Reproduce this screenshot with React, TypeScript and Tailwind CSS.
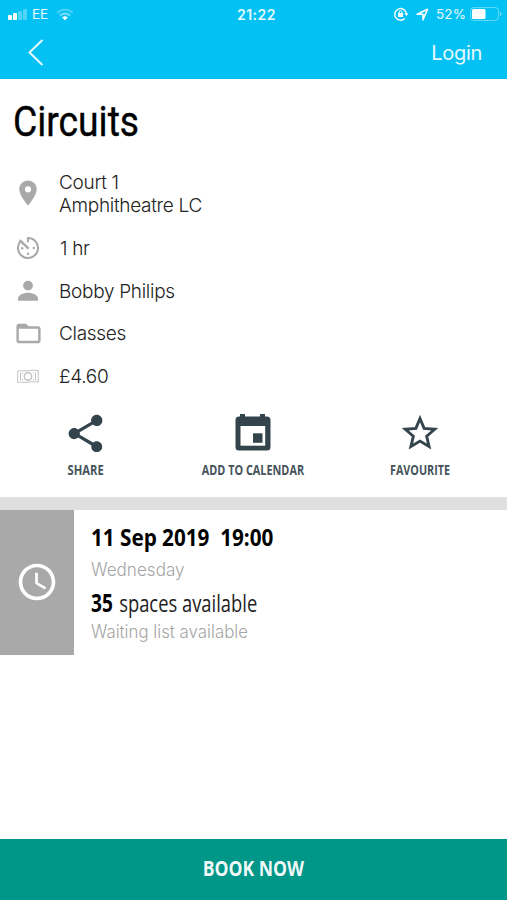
import type { ReactNode } from 'react';
import { MdPlace, MdFolderOpen, MdShare, MdAccessTime } from 'react-icons/md';

function StatusBar() {
  return (
    <div className="flex h-7 items-center px-[7px] font-['Inter',sans-serif] text-[13.5px] text-white/90">
      <div className="flex flex-1 items-center">
        <svg width="20" height="11" viewBox="0 0 20 11" fill="white" className="mt-px">
          <rect x="1" y="6" width="4" height="5" rx="1" />
          <rect x="6" y="4" width="4" height="7" rx="1" />
          <rect x="11" y="2" width="4" height="9" rx="1" opacity=".3" />
          <rect x="16" y="0" width="4" height="11" rx="1" opacity=".3" />
        </svg>
        <span className="ml-[5px]">EE</span>
        <svg width="18" height="13" viewBox="0 0 18 13" fill="none" stroke="white" strokeWidth="1.8" className="ml-[8px]">
          <path d="M1.2 4.8a11 11 0 0 1 15.6 0" opacity=".3" />
          <path d="M4 7.6a7 7 0 0 1 10 0" opacity=".45" />
          <path d="M9 12.3 6.2 9.5a4 4 0 0 1 5.6 0Z" fill="white" stroke="none" />
        </svg>
      </div>
      <div className="translate-x-[3px] text-[14px] font-semibold tracking-[0.5px]">21:22</div>
      <div className="flex flex-1 items-center justify-end">
        <svg width="15" height="14" viewBox="0 0 15 14" fill="none" stroke="white" strokeWidth="1.4">
          <path d="M10.7 11.5A5.8 5.8 0 1 1 12.4 7" />
          <path d="m10.3 6.4 2.2 2.5 2-2.7Z" fill="white" stroke="none" />
          <rect x="4.1" y="6.1" width="5" height="3.8" rx=".5" fill="white" stroke="none" />
          <path d="M5.2 6.5V5.1a1.4 1.4 0 0 1 2.8 0v1.4" strokeWidth="1" />
        </svg>
        <svg width="13" height="13" viewBox="0 0 13 13" fill="none" stroke="white" strokeWidth="1.6" strokeLinejoin="round" className="ml-[7px]">
          <path d="M1.2 6.2 11.5 1.3 7 11.8V6.2Z" />
        </svg>
        <span className="ml-[7px] tracking-[0.1px]">52%</span>
        <svg width="32" height="14" viewBox="0 0 32 14" className="ml-[4px] -mr-[2px]">
          <rect x=".6" y=".6" width="27.8" height="12.8" rx="3" fill="none" stroke="white" strokeOpacity=".4" />
          <rect x="2" y="2" width="13.5" height="10" rx="1.5" fill="white" />
          <path d="M30 5v4c1.2-.4 1.6-1.2 1.6-2S31.2 5.4 30 5Z" fill="white" opacity=".45" />
        </svg>
      </div>
    </div>
  );
}

function TimerIcon() {
  return (
    <svg width="24" height="24" viewBox="0 0 24 24" fill="none" stroke="currentColor" strokeWidth="2.1">
      <path d="M12 6.3V2a10 10 0 1 1-7.7 3.6" />
      <path d="M3.6 4.2 12.6 12.6" strokeWidth="2.5" />
      <g fill="currentColor" stroke="none">
        <circle cx="6.2" cy="12.3" r="1.2" />
        <circle cx="17.8" cy="12" r="1.2" />
        <circle cx="12" cy="17.8" r="1.2" />
      </g>
    </svg>
  );
}

function PersonIcon() {
  return (
    <svg width="22" height="22" viewBox="0 0 22 22" fill="currentColor">
      <circle cx="11" cy="5.6" r="4.9" />
      <path d="M1 20.8v-2.1c0-3.600 5-5.900 10-5.900s10 2.300 10 5.900v2.100Z" />
    </svg>
  );
}

function MoneyIcon() {
  return (
    <svg width="22" height="15" viewBox="0 0 22 15" fill="none" stroke="#c3c3c3" strokeWidth="1">
      <path d="M.7 2.2C4 .8 7 2.6 11 1.8s7-.6 10.300-.1v11.400c-3.300-.5-6.300-.5-10.300.1S4 12.600.7 13.700Z" />
      <circle cx="11" cy="7.5" r="3.7" strokeWidth="1.5" />
      <path d="M3.500 3.500v8M5.500 3.500v1.200M5.500 10.200v1.300M18.500 3.500v8M16.500 3.500v1.200M16.500 10.200v1.300" />
    </svg>
  );
}

function CalendarIcon() {
  return (
    <svg width="36" height="37" viewBox="0 0 36 37" fill="currentColor">
      <path d="M5 0h5v2.500h15V0h5v2.500h2A3.500 3.500 0 0 1 35.500 6v27a3.500 3.500 0 0 1-3.500 3.500H4A3.500 3.500 0 0 1 .5 33V6A3.500 3.500 0 0 1 4 2.500h1Z" />
      <path d="M5.500 12h24.700v19.700H5.500Z" fill="white" />
      <path d="M18 19.300h9.500v9.500H18Z" />
    </svg>
  );
}

function StarIcon() {
  return (
    <svg width="40" height="40" viewBox="0 0 36 36" fill="none" stroke="currentColor" strokeWidth="2.600">
      <path d="m18 5 3.700 8.800 9.600.8-7.300 6.300 2.200 9.300-8.200-4.900-8.200 4.900 2.200-9.300-7.300-6.300 9.600-.8Z" />
    </svg>
  );
}

function InfoRow({ icon, children }: { icon: ReactNode; children: ReactNode }) {
  return (
    <div className="flex h-[42.8px] items-center">
      <div className="flex w-[56px] shrink-0 justify-center text-[#a9a9a9]">{icon}</div>
      <div className="ml-[3px]">{children}</div>
    </div>
  );
}

const bodyText = "block w-fit whitespace-nowrap font-['Inter','Liberation_Sans',sans-serif] text-[19px] font-light leading-[23px] tracking-[-0.3px] text-[#222]";
const actionText = "block origin-center whitespace-nowrap font-['Open_Sans',sans-serif] text-[14px] font-bold leading-5 text-[#45535a]";

export default function App() {
  return (
    <div className="flex h-[900px] w-[507px] flex-col overflow-hidden bg-white">
      <header className="h-[79px] shrink-0 bg-[#03c1f3]">
        <StatusBar />
        <div className="flex h-[49px] items-center justify-between pl-[27px] pr-[25px] text-white/90">
          <svg width="17" height="27" viewBox="0 0 17 27" fill="none" stroke="currentColor" strokeWidth="2">
            <path d="M15.500 1 2.500 13.500l13 12.500" />
          </svg>
          <span className="origin-right font-['Inter',sans-serif] text-[20px] font-normal tracking-[-0.3px]">Login</span>
        </div>
      </header>

      <h1 className="mt-[17px] h-[50px] shrink-0 pl-[13px] font-['Roboto',sans-serif] text-[43px] font-normal leading-[50px] text-black">
        <span className="block w-fit origin-left scale-x-[0.866] [-webkit-text-stroke:0.4px_black]">Circuits</span>
      </h1>

      <section className="mt-[18px] shrink-0">
        <div className="flex h-[63px] items-start pt-px">
          <div className="flex w-[56px] shrink-0 justify-center pt-[13px] text-[#a9a9a9]"><MdPlace size={30} /></div>
          <div className="ml-[3px] pt-[6px]">
            <span className={bodyText}>Court 1</span>
            <span className={bodyText}>Amphitheatre LC</span>
          </div>
        </div>
        <InfoRow icon={<TimerIcon />}><span className={bodyText + " pl-px"}>1 hr</span></InfoRow>
        <InfoRow icon={<PersonIcon />}><span className={bodyText}>Bobby Philips</span></InfoRow>
        <InfoRow icon={<MdFolderOpen size={29} />}><span className={bodyText}>Classes</span></InfoRow>
        <InfoRow icon={<MoneyIcon />}><span className={bodyText}>£4.60</span></InfoRow>
      </section>

      <section className="grid h-[99px] shrink-0 grid-cols-[171px_163px_171px] text-[#34444c]">
        <div className="flex flex-col items-center pt-[13px]">
          <MdShare size={45} className="shrink-0" />
          <span className={actionText + " mt-[4px] scale-x-[0.80]"}>SHARE</span>
        </div>
        <div className="flex flex-col items-center pt-[16px]">
          <CalendarIcon />
          <span className={actionText + " mt-[9px] scale-x-[0.775]"}>ADD TO CALENDAR</span>
        </div>
        <div className="flex flex-col items-center pt-[15px]">
          <StarIcon />
          <span className={actionText + " mt-[7px] scale-x-[0.77]"}>FAVOURITE</span>
        </div>
      </section>

      <div className="h-[12.5px] shrink-0 bg-[#dfdfdf]" />

      <section className="flex h-[145px] shrink-0">
        <div className="flex w-[74px] shrink-0 items-center justify-center bg-[#a9a9a9] text-white"><MdAccessTime size={44} /></div>
        <div className="pl-[17px] pt-[11px]">
          <div className="w-fit origin-left scale-x-[0.862] whitespace-pre font-['Open_Sans',sans-serif] text-[24px] font-bold leading-8 text-black">11 Sep 2019  19:00</div>
          <div className="mt-px w-fit origin-left scale-x-[0.95] font-['Inter',sans-serif] text-[18px] font-light leading-8 text-[#a5a5a5]">Wednesday</div>
          <div className="-mt-[2px] w-fit origin-left scale-x-[0.765] whitespace-nowrap font-['Open_Sans',sans-serif] text-[24px] leading-9 text-[#1d1d1d]"><b className="mr-[2px] text-[25px] text-black">35</b> spaces available</div>
          <div className="w-fit origin-left scale-x-[0.935] font-['Inter',sans-serif] text-[18px] font-light leading-[22px] text-[#a5a5a5]">Waiting list available</div>
        </div>
      </section>

      <button className="mt-auto flex h-[61px] shrink-0 items-center justify-center bg-[#009688] pb-[4px] font-['Open_Sans',sans-serif] text-[22px] font-bold text-white/95">
        <span className="block scale-x-[0.80]">BOOK NOW</span>
      </button>
    </div>
  );
}
